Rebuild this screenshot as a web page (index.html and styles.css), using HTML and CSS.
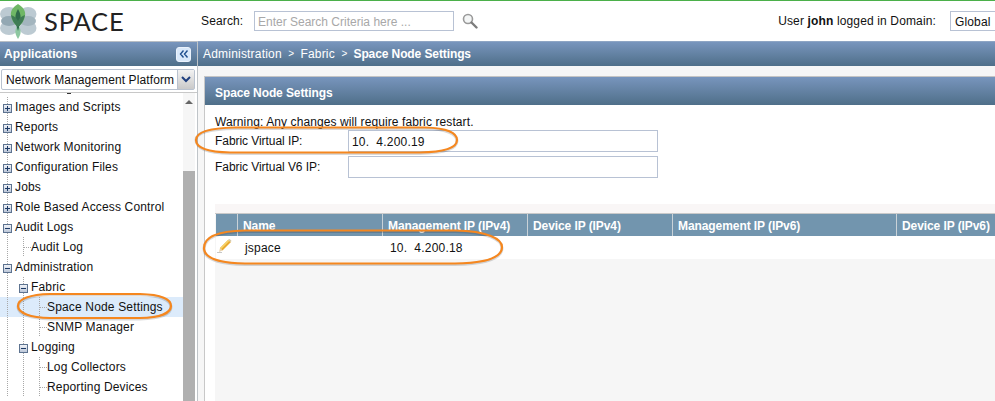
FILE: index.html
```html
<!DOCTYPE html>
<html lang="en">
<head>
<meta charset="utf-8">
<title>Space Node Settings</title>
<link rel="stylesheet" href="styles.css">
</head>
<body>
<svg class="defs" width="0" height="0" aria-hidden="true">
  <defs>
    <linearGradient id="box" x1="0" y1="0" x2="0" y2="1"><stop offset="0" stop-color="#f4f6fa"/><stop offset="1" stop-color="#b9c4d6"/></linearGradient>
    <symbol id="plus" viewBox="0 0 9 9"><rect x=".5" y=".5" width="8" height="8" fill="url(#box)" stroke="#5d7390"/><path d="M2 4.5h5M4.5 2v5" stroke="#1d3a66"/></symbol>
    <symbol id="minus" viewBox="0 0 9 9"><rect x=".5" y=".5" width="8" height="8" fill="url(#box)" stroke="#5d7390"/><path d="M2 4.5h5" stroke="#1d3a66"/></symbol>
  </defs>
</svg>
<header class="top">
  <div class="brand">
    <svg class="logo" width="40" height="40" viewBox="0 0 40 40" aria-hidden="true">
      <g fill="#bccad2">
        <ellipse cx="9" cy="13" rx="9" ry="7"/>
        <ellipse cx="9" cy="27" rx="9" ry="7"/>
        <ellipse cx="28" cy="13" rx="8.500" ry="7"/>
        <ellipse cx="28" cy="27" rx="8.500" ry="7"/>
        <ellipse cx="9" cy="20" rx="8" ry="5" fill="#93a8b3"/>
        <ellipse cx="28" cy="20" rx="8" ry="5" fill="#a3b5be"/>
      </g>
      <path d="M18 3c5 3 8 7 7 12-1 5-3 8-7 11-4-3-6-6-7-11-1-5 2-9 7-12z" fill="#6fb766"/>
      <path d="M18 24c3 4 4 8 0 14-4-6-3-10 0-14z" fill="#8cc6a0"/>
      <path d="M18 8c3 5 4 10 0 22-4-12-3-17 0-22z" fill="#2f6b4a"/>
      <path d="M11 14c3 1 6 3 7 6 1-3 4-5 7-6-1 5-3 9-7 12-4-3-6-7-7-12z" fill="#3f7c55"/>
    </svg>
    <span class="wordmark">SPACE</span>
  </div>
  <span class="search-label">Search:</span>
  <div class="search-box">Enter Search Criteria here ...</div>
  <svg class="search-icon" width="16" height="16" viewBox="0 0 16 16" aria-hidden="true">
    <circle cx="6" cy="6" r="4.500" fill="#f4f6f6" stroke="#9a9a9a" stroke-width="1.600"/>
    <path d="M9.500 9.500l5 5" stroke="#7d7d7d" stroke-width="2.400" stroke-linecap="round"/>
  </svg>
  <div class="user">User <b>john</b> logged in Domain:</div>
  <div class="domain">Global</div>
</header>
<main class="main">
  <aside class="side">
    <div class="bar side-bar">
      <span class="bar-title">Applications</span>
      <span class="collapse">
        <svg width="10" height="8" viewBox="0 0 10 8" aria-hidden="true"><path d="M4.500 .5L1.500 4l3 3.500M8.500 .5L5.500 4l3 3.500" fill="none" stroke="#1f4f8f" stroke-width="1.400"/></svg>
      </span>
    </div>
    <div class="platform">
      <span class="platform-text">Network Management Platform</span>
      <span class="platform-btn">
        <svg width="10" height="7" viewBox="0 0 10 7" aria-hidden="true"><path d="M1 1l4 4 4-4" fill="none" stroke="#1f3f7f" stroke-width="2"/></svg>
      </span>
    </div>
    <div class="tree-wrap">
      <ul class="tree">
        <li class="row"><span class="cell line"><svg class="exp"><use href="#plus"/></svg></span><span class="label">Images and Scripts</span></li>
        <li class="row"><span class="cell line"><svg class="exp"><use href="#plus"/></svg></span><span class="label">Reports</span></li>
        <li class="row"><span class="cell line"><svg class="exp"><use href="#plus"/></svg></span><span class="label">Network Monitoring</span></li>
        <li class="row"><span class="cell line"><svg class="exp"><use href="#plus"/></svg></span><span class="label">Configuration Files</span></li>
        <li class="row"><span class="cell line"><svg class="exp"><use href="#plus"/></svg></span><span class="label">Jobs</span></li>
        <li class="row"><span class="cell line"><svg class="exp"><use href="#plus"/></svg></span><span class="label">Role Based Access Control</span></li>
        <li class="row"><span class="cell line"><svg class="exp"><use href="#minus"/></svg></span><span class="label">Audit Logs</span></li>
        <li class="row"><span class="cell line"></span><span class="cell branch"></span><span class="label">Audit Log</span></li>
        <li class="row"><span class="cell line"><svg class="exp"><use href="#minus"/></svg></span><span class="label">Administration</span></li>
        <li class="row"><span class="cell line"></span><span class="cell line"><svg class="exp"><use href="#minus"/></svg></span><span class="label">Fabric</span></li>
        <li class="row selected"><span class="cell line"></span><span class="cell line"></span><span class="cell branch"></span><span class="label">Space Node Settings</span></li>
        <li class="row"><span class="cell line"></span><span class="cell line"></span><span class="cell branch"></span><span class="label">SNMP Manager</span></li>
        <li class="row"><span class="cell line"></span><span class="cell line"><svg class="exp"><use href="#minus"/></svg></span><span class="label">Logging</span></li>
        <li class="row"><span class="cell line"></span><span class="cell line"></span><span class="cell branch"></span><span class="label">Log Collectors</span></li>
        <li class="row"><span class="cell line"></span><span class="cell line"></span><span class="cell branch"></span><span class="label">Reporting Devices</span></li>
      </ul>
      <div class="scroll">
        <span class="scroll-up"></span>
        <span class="scroll-thumb"></span>
      </div>
    </div>
  </aside>
  <section class="content">
    <div class="bar crumbs">
      <span>Administration</span><span class="sep">&gt;</span><span>Fabric</span><span class="sep">&gt;</span><b>Space Node Settings</b>
    </div>
    <div class="stage">
      <div class="panel">
        <div class="bar panel-head">Space Node Settings</div>
        <div class="panel-body">
          <p class="warning">Warning: Any changes will require fabric restart.</p>
          <div class="form-row"><span class="form-label">Fabric Virtual IP:</span><div class="field">10.&nbsp;&nbsp;4.200.19</div></div>
          <div class="form-row"><span class="form-label">Fabric Virtual V6 IP:</span><div class="field"></div></div>
          <div class="grid-area">
            <div class="grid-band"></div>
            <div class="grid-head">
              <span class="col c0"></span>
              <span class="col c1">Name</span>
              <span class="col c2">Management IP (IPv4)</span>
              <span class="col c3">Device IP (IPv4)</span>
              <span class="col c4">Management IP (IPv6)</span>
              <span class="col c5">Device IP (IPv6)</span>
            </div>
            <div class="grid-row">
              <span class="col c0">
                <svg width="16" height="15" viewBox="0 0 16 15" aria-hidden="true">
                  <path d="M2 14l1-4 2.500 2.500z" fill="#e8d3b0"/>
                  <path d="M3 10l8-8 3 2-8.500 8.500z" fill="#e9a92f"/>
                  <path d="M3 10l8-8 1.300 1-8 8z" fill="#f6d36c"/>
                  <path d="M11 2l1-1c1 0 2 1 2.500 2l-1 1z" fill="#d8c9a8"/>
                  <path d="M0 14.500h5" stroke="#c8c8c8"/>
                </svg>
              </span>
              <span class="col c1">jspace</span>
              <span class="col c2">10.&nbsp;&nbsp;4.200.18</span>
              <span class="col c3"></span>
              <span class="col c4"></span>
              <span class="col c5"></span>
            </div>
          </div>
        </div>
      </div>
    </div>
  </section>
</main>
<svg class="marks" width="995" height="401" viewBox="0 0 995 401" aria-hidden="true">
  <g class="mark-shadow">
    <path d="M196 140C196 132 210 129 235 128.500L425 128.500C447 129 457 134 457 141C457 149 445 153 420 153.500L230 153.500C208 153 196 149 196 140Z"/>
    <path d="M204 249C204 238 218 232 245 231.500L455 231.500C488 232 502 240 502 248C502 257 490 264 455 264.500L245 264.500C218 264 204 259 204 249Z"/>
    <path d="M18 307C18 300 30 295.500 50 295L140 295C160 295.500 171 300 171 307C171 314 160 318.500 140 319L50 319C30 318.500 18 314 18 307Z"/>
  </g>
  <g class="mark">
    <path d="M196 140C196 132 210 128 235 127.500L425 127.500C447 128 457 133 457 140C457 148 445 152 420 152.500L230 152.500C208 152 196 148 196 140Z"/>
    <path d="M204 248C204 237 218 231 245 230.500L455 230.500C488 231 502 239 502 247C502 256 490 263 455 263.500L245 263.500C218 263 204 258 204 248Z"/>
    <path d="M18 306C18 299 30 294.500 50 294L140 294C160 294.500 171 299 171 306C171 313 160 317.500 140 318L50 318C30 317.500 18 313 18 306Z"/>
  </g>
</svg>
</body>
</html>
```
FILE: styles.css
```css
* { box-sizing: border-box; }
html, body { margin: 0; padding: 0; }
body {
  position: relative;
  width: 995px;
  height: 401px;
  overflow: hidden;
  background: #fff;
  color: #111;
  font: 12px/14px "Liberation Sans", Arial, sans-serif;
  letter-spacing: .14px;
}
.defs { display: block; height: 0; }

.top {
  display: flex;
  align-items: center;
  height: 41px;
  border-top: 1px solid #4bb04a;
}
.brand { display: flex; align-items: center; width: 201px; flex: none; }
.logo { flex: none; }
.wordmark {
  margin-left: 4px;
  font: 400 25.500px/28px Lato, "Liberation Sans", sans-serif;
  letter-spacing: .8px;
  color: #222;
}
.search-label { width: 53px; flex: none; margin-top: -1px; }
.search-box {
  width: 200px;
  height: 20px;
  flex: none;
  padding: 3px 0 0 3px;
  border: 1px solid #b8c2d4;
  color: #a8a8a8;
  letter-spacing: 0;
  white-space: nowrap;
}
.search-icon { margin-left: 8px; flex: none; }
.user { margin-left: auto; margin-top: -1px; }
.domain {
  width: 45px;
  height: 20px;
  flex: none;
  margin-left: 14px;
  padding: 3px 0 0 4px;
  border: 1px solid #b8c2d4;
  border-right: 0;
}

.main { display: flex; height: 360px; }
.bar {
  display: flex;
  align-items: center;
  color: #fff;
  background: linear-gradient(#7895bd, #4f6f89);
}
.side { width: 198px; flex: none; display: flex; flex-direction: column; border-right: 1px solid #bfc4c8; }
.side-bar { height: 25px; padding: 0 4px; justify-content: space-between; border-top: 1px solid #b9bec4; }
.bar-title { font-weight: 700; letter-spacing: .1px; }
.collapse {
  display: flex;
  align-items: center;
  justify-content: center;
  width: 15px;
  height: 15px;
  margin-right: 2px;
  background: #d8e8fa;
  border: 1px solid #eaf2fc;
  border-radius: 3px;
}
.platform {
  display: flex;
  height: 21px;
  margin: 3px 2px 2px 1px;
  border: 1px solid #b9c2cf;
  border-radius: 2px;
}
.platform-text { flex: 1; min-width: 0; padding: 3px 0 0 4px; letter-spacing: .1px; white-space: nowrap; }
.platform-btn {
  width: 17px;
  flex: none;
  display: flex;
  align-items: center;
  justify-content: center;
  background: linear-gradient(#f2f2f2, #c9c9c9);
  border-left: 1px solid #b9c2cf;
}
.tree-wrap { flex: 1; display: flex; border-top: 1px solid #c8c8c8; min-height: 0; padding-right: 2px; }
.tree {
  flex: 1;
  margin: 0;
  padding: 4px 0 0;
  list-style: none;
  overflow: hidden;
  background: linear-gradient(#333, #333) 67px 0 / 4px 1px no-repeat;
}
.row { display: flex; height: 20px; align-items: stretch; }
.selected { background: #dcebfb; }
.cell { display: block; width: 16px; flex: none; }
.line { background: repeating-linear-gradient(#a8a8a8 0 1px, transparent 1px 2px) 7px 0 / 1px 100% no-repeat; }
.branch {
  background:
    repeating-linear-gradient(#a8a8a8 0 1px, transparent 1px 2px) 7px 0 / 1px 100% no-repeat,
    repeating-linear-gradient(90deg, #a8a8a8 0 1px, transparent 1px 2px) 8px 10px / 7px 1px no-repeat;
}
.exp { display: block; width: 9px; height: 9px; margin: 7px 0 0 3px; }
.label { margin-left: -1px; padding-top: 3px; white-space: nowrap; letter-spacing: .16px; }
.scroll { width: 12px; flex: none; display: flex; flex-direction: column; align-items: center; background: #f6f6f6; }
.scroll-up {
  width: 0;
  height: 0;
  margin-top: 7px;
  border: 4px solid transparent;
  border-top: 0;
  border-bottom: 4px solid #666;
}
.scroll-thumb { width: 12px; flex: 1; margin-top: 67px; background: #b0b0b0; }

.content { flex: 1; min-width: 0; display: flex; flex-direction: column; background: #f6f6f6; }
.crumbs { height: 25px; flex: none; padding-left: 5px; border-top: 1px solid #8ea5c4; letter-spacing: .2px; }
.crumbs b { letter-spacing: -.1px; }
.sep { margin: 0 6px 0 6.500px; font-size: 10px; }
.stage { flex: 1; min-height: 0; padding: 10px 0 0 6px; }
.panel { height: 100%; border-left: 1px solid #c8c8c8; border-top: 1px solid #c4c4c4; background: #fff; display: flex; flex-direction: column; }
.panel-head { height: 28px; flex: none; padding: 3px 0 0 10px; font-weight: 700; letter-spacing: -.1px; }
.panel-body { flex: 1; min-height: 0; padding-left: 10px; display: flex; flex-direction: column; }
.warning { margin: 10px 0 0; height: 15px; letter-spacing: .1px; white-space: nowrap; }
.form-row { display: flex; align-items: center; height: 22px; margin-bottom: 4px; }
.form-label { width: 133px; flex: none; letter-spacing: -.06px; }
.field { width: 310px; height: 22px; padding: 4px 0 0 3px; border: 1px solid #b8c2d4; letter-spacing: .2px; }
.grid-area { flex: 1; margin-top: 22px; background: #f6f6f6; }
.grid-band { height: 10px; background: #f9f6f6; border-bottom: 1px solid #c9c9c9; }
.grid-head { display: flex; height: 22px; margin-left: 1px; background: #7295ae; color: #fff; font-weight: 700; letter-spacing: -.08px; }
.grid-head .col { border-right: 1px solid #c9d2d8; padding: 5px 0 0 5px; }
.grid-row { display: flex; height: 23px; margin-left: 1px; background: #fff; }
.grid-row .col { padding: 5px 0 0 7px; letter-spacing: .2px; }
.grid-row .c0 { padding: 2px 0 0 1px; }
.col { display: block; flex: none; white-space: nowrap; overflow: hidden; }
.c0 { width: 22px; }
.c1 { width: 145px; }
.c2 { width: 145px; }
.c3 { width: 145px; }
.c4 { width: 224px; }
.c5 { width: 110px; }

.marks { position: absolute; left: 0; top: 0; pointer-events: none; }
.mark { fill: none; stroke: #f5871f; stroke-width: 2.200; }
.mark-shadow { fill: none; stroke: #000; stroke-opacity: .15; stroke-width: 3; }
```
